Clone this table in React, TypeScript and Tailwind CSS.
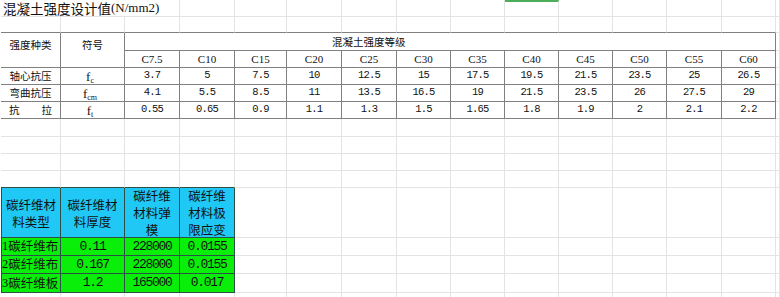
import type { ReactNode } from 'react';

const grades = ['C7.5', 'C10', 'C15', 'C20', 'C25', 'C30', 'C35', 'C40', 'C45', 'C50', 'C55', 'C60'];

const rows = [
  { label: '轴心抗压', sym: 'c', values: ['3.7', '5', '7.5', '10', '12.5', '15', '17.5', '19.5', '21.5', '23.5', '25', '26.5'] },
  { label: '弯曲抗压', sym: 'cm', values: ['4.1', '5.5', '8.5', '11', '13.5', '16.5', '19', '21.5', '23.5', '26', '27.5', '29'] },
  { label: '抗拉', sym: 't', values: ['0.55', '0.65', '0.9', '1.1', '1.3', '1.5', '1.65', '1.8', '1.9', '2', '2.1', '2.2'] },
];

const fibre = [
  { name: '碳纤维布', n: '1', t: '0.11', e: '228000', s: '0.0155' },
  { name: '碳纤维布', n: '2', t: '0.167', e: '228000', s: '0.0155' },
  { name: '碳纤维板', n: '3', t: '1.2', e: '165000', s: '0.017' },
];

// light sheet gridline / dark table border
const GRID = 'border-r border-b border-[#e3e3e3]';
const DARK = 'border-r border-b border-[#808080]';
const TOPEDGE = 'border-r border-b border-r-[#e3e3e3] border-b-[#808080]';
const FIB = 'border-r border-b border-[#2c5048]';

function Cell({ className = '', children }: { className?: string; children?: ReactNode }) {
  return <div className={`flex items-center justify-center whitespace-nowrap ${className}`}>{children}</div>;
}

function Blank({ n, className = GRID }: { n: number; className?: string }) {
  return (
    <>
      {Array.from({ length: n }).map((_, i) => (
        <Cell key={i} className={className} />
      ))}
    </>
  );
}

function Num({ v }: { v: string }) {
  return <span className="font-['Liberation_Mono',monospace] text-[10.5px] tracking-[-0.8px] text-[#111]">{v}</span>;
}

export default function App() {
  return (
    <div className="h-[297px] w-[780px] overflow-hidden bg-white pl-px text-[#111] font-['Noto_Sans_CJK_SC',sans-serif]">
      <div className="grid grid-cols-[60px_64px_55px_55px_52px_55px_55px_54px_54px_54px_54px_54px_55px_54px_1fr] grid-rows-[17px_16px_18px_17px_17px_17px_17px_18px_17px_17px_17px_50px_18px_18px_19px_17px]">
        {/* row 0: title */}
        <div className={`col-span-3 flex items-center whitespace-nowrap pl-[2px] text-[13.5px] leading-[16px] ${GRID}`}>
          <span>混凝土强度设计值</span>
          <span className="font-['Liberation_Serif',serif] text-[13px]">(N/mm2)</span>
        </div>
        <Blank n={6} />
        <Cell className={`${GRID} border-t-2 border-t-[#4cae5a]`} />
        <Blank n={5} />

        {/* row 1 */}
        <Blank n={14} className={TOPEDGE} />
        <Cell className={GRID} />

        {/* rows 2-3: header */}
        <div className={`row-span-2 flex justify-center pt-[5px] text-[10.5px] leading-[13px] ${DARK}`}>强度种类</div>
        <div className={`row-span-2 flex justify-center pt-[5px] text-[10.5px] leading-[13px] ${DARK}`}>符号</div>
        <div className={`col-span-12 flex items-center pl-[207px] text-[10.5px] ${DARK}`}>混凝土强度等级</div>
        <Cell className={GRID} />
        {grades.map((g) => (
          <Cell key={g} className={`${DARK} font-['Liberation_Serif',serif] text-[11px]`}>
            {g}
          </Cell>
        ))}
        <Cell className={GRID} />

        {/* rows 4-6: data */}
        {rows.map((r) => (
          <div key={r.label} className="contents">
            {r.label === '抗拉' ? (
              <div className={`flex items-center justify-between px-[8px] text-[10.5px] ${DARK}`}>
                <span>抗</span>
                <span>拉</span>
              </div>
            ) : (
              <Cell className={`${DARK} text-[10.5px]`}>{r.label}</Cell>
            )}
            <Cell className={`${DARK} pr-[5px]`}>
              <span className="font-['Liberation_Serif',serif] text-[13px] leading-none">
                f<span className="relative top-[2px] text-[8px]">{r.sym}</span>
              </span>
            </Cell>
            {r.values.map((v, i) => (
              <Cell key={i} className={DARK}>
                <Num v={v} />
              </Cell>
            ))}
            <Cell className={GRID} />
          </div>
        ))}

        {/* rows 7-10: empty */}
        <Blank n={45} />
        <Blank n={4} className="border-r border-b border-r-[#e3e3e3] border-b-[#2c5048]" />
        <Blank n={11} />

        {/* row 11: cyan header */}
        {['碳纤维材\n料类型', '碳纤维材\n料厚度', '碳纤维\n材料弹\n模', '碳纤维\n材料极\n限应变'].map((t, i) => (
          <div
            key={i}
            className={`flex items-center justify-center whitespace-pre-line bg-[#1fc8f5] text-center text-[12.5px] leading-[17px] ${FIB} ${
              i === 0 ? 'border-l' : ''
            }`}
          >
            {t}
          </div>
        ))}
        <Blank n={11} />

        {/* rows 12-14: green data */}
        {fibre.map((f) => (
          <div key={f.n} className="contents">
            <div className={`flex items-center whitespace-nowrap border-l bg-[#0aef0a] text-[12.5px] ${FIB}`}>
              <span className="font-['Liberation_Serif',serif] text-[12.5px]">{f.n}</span>
              {f.name}
            </div>
            {[f.t, f.e, f.s].map((v, i) => (
              <Cell key={i} className={`bg-[#0aef0a] ${FIB}`}>
                <span className="font-['Liberation_Mono',monospace] text-[13px] tracking-[-1.3px] text-[#111]">{v}</span>
              </Cell>
            ))}
            <Blank n={11} />
          </div>
        ))}

        {/* row 15 */}
        <Blank n={15} />
      </div>
    </div>
  );
}
